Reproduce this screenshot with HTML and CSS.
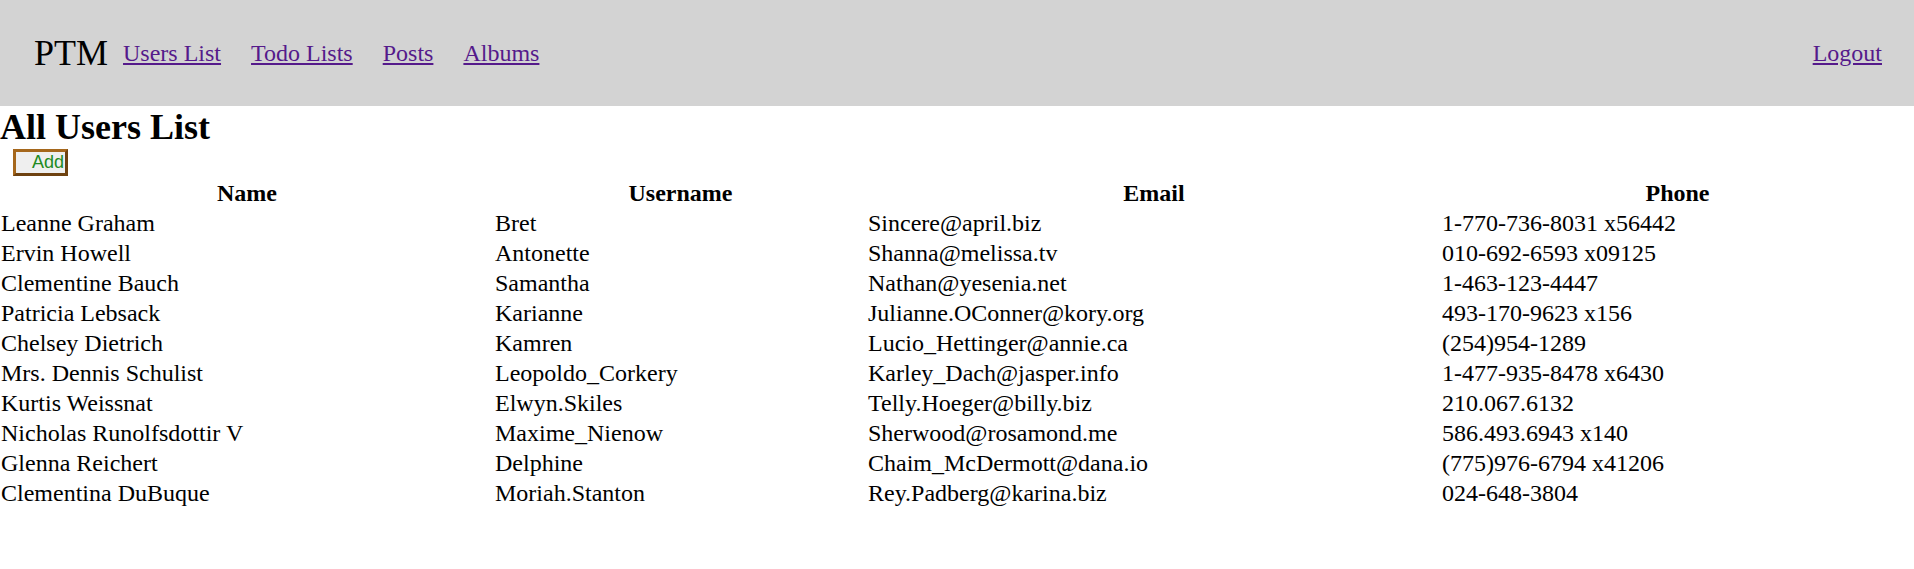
FILE: index.html
```html
<!DOCTYPE html>
<html lang="en">
<head>
<meta charset="utf-8">
<title>PTM - All Users List</title>
<link rel="stylesheet" href="styles.css">
</head>
<body>
<header class="topbar">
  <span class="brand">PTM</span>
  <nav class="nav-links">
    <a href="#users">Users List</a>
    <a href="#todos">Todo Lists</a>
    <a href="#posts">Posts</a>
    <a href="#albums">Albums</a>
  </nav>
  <a class="logout" href="#logout">Logout</a>
</header>
<main>
  <h2 class="page-title">All Users List</h2>
  <button class="add-btn" type="button">Add</button>
  <table class="users">
    <colgroup>
      <col class="col-name">
      <col class="col-user">
      <col class="col-email">
      <col class="col-phone">
    </colgroup>
    <thead>
      <tr><th>Name</th><th>Username</th><th>Email</th><th>Phone</th></tr>
    </thead>
    <tbody>
      <tr><td>Leanne Graham</td><td>Bret</td><td>Sincere@april.biz</td><td>1-770-736-8031 x56442</td></tr>
      <tr><td>Ervin Howell</td><td>Antonette</td><td>Shanna@melissa.tv</td><td>010-692-6593 x09125</td></tr>
      <tr><td>Clementine Bauch</td><td>Samantha</td><td>Nathan@yesenia.net</td><td>1-463-123-4447</td></tr>
      <tr><td>Patricia Lebsack</td><td>Karianne</td><td>Julianne.OConner@kory.org</td><td>493-170-9623 x156</td></tr>
      <tr><td>Chelsey Dietrich</td><td>Kamren</td><td>Lucio_Hettinger@annie.ca</td><td>(254)954-1289</td></tr>
      <tr><td>Mrs. Dennis Schulist</td><td>Leopoldo_Corkery</td><td>Karley_Dach@jasper.info</td><td>1-477-935-8478 x6430</td></tr>
      <tr><td>Kurtis Weissnat</td><td>Elwyn.Skiles</td><td>Telly.Hoeger@billy.biz</td><td>210.067.6132</td></tr>
      <tr><td>Nicholas Runolfsdottir V</td><td>Maxime_Nienow</td><td>Sherwood@rosamond.me</td><td>586.493.6943 x140</td></tr>
      <tr><td>Glenna Reichert</td><td>Delphine</td><td>Chaim_McDermott@dana.io</td><td>(775)976-6794 x41206</td></tr>
      <tr><td>Clementina DuBuque</td><td>Moriah.Stanton</td><td>Rey.Padberg@karina.biz</td><td>024-648-3804</td></tr>
    </tbody>
  </table>
</main>
</body>
</html>
```
FILE: styles.css
```css
html, body {
  margin: 0;
  padding: 0;
  background: #ffffff;
  color: #000000;
  font-family: "Liberation Serif", "Times New Roman", serif;
}

.topbar {
  display: flex;
  align-items: center;
  height: 106px;
  padding: 0 32px 0 34px;
  background: #d3d3d3;
  box-sizing: border-box;
}

.brand {
  font-size: 36px;
  color: #000000;
}

.nav-links {
  display: flex;
  align-items: center;
  gap: 30px;
  margin-left: 15px;
}

.topbar a {
  font-size: 24px;
  color: #551a8b;
  text-decoration: underline;
}

.logout {
  margin-left: auto;
}

.page-title {
  margin: 0;
  font-size: 36px;
  line-height: 42px;
  font-weight: bold;
}

.add-btn {
  display: block;
  margin: 1px 0 2px 13px;
  padding: 0 1px 0 16px;
  height: 27px;
  font-family: "Liberation Sans", Arial, sans-serif;
  font-size: 18px;
  line-height: 21px;
  color: #228b22;
  background: #efefef;
  border-style: solid;
  border-width: 3px;
  border-color: #a5671c #6e4210 #6e4210 #a5671c;
  box-sizing: border-box;
}

.users {
  width: 100%;
  table-layout: fixed;
  border-collapse: collapse;
  font-size: 24px;
}

.col-name { width: 494px; }
.col-user { width: 373px; }
.col-email { width: 574px; }

.users th,
.users td {
  height: 30px;
  padding: 0 1px;
  line-height: 30px;
  white-space: nowrap;
}

.users th {
  text-align: center;
  font-weight: bold;
}

.users td {
  text-align: left;
}
```
